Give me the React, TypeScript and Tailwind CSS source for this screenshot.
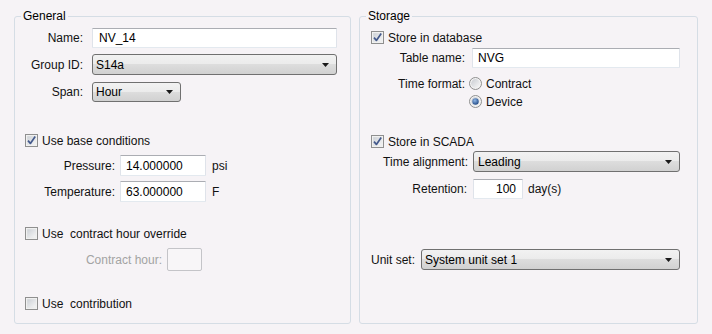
import React from "react";

const font = { fontFamily: '"Liberation Sans", Arial, sans-serif' };

function Check({ checked = false }: { checked?: boolean }) {
    return (
        <svg width="13" height="13" viewBox="0 0 13 13" className="shrink-0">
            <defs>
                <linearGradient id="cbg" x1="0" y1="0" x2="1" y2="1">
                    <stop offset="0" stopColor="#cbcfd5" />
                    <stop offset="1" stopColor="#f7f7f7" />
                </linearGradient>
            </defs>
            <rect x="0.5" y="0.5" width="12" height="12" fill="#f4f4f4" stroke="#8f8f8f" />
            <rect x="2" y="2" width="9" height="9" fill="url(#cbg)" stroke="#e8e8e8" strokeWidth="0.6" />
            {checked && (
                <path d="M3 6.6 L5.4 9.4 L10.2 2.6" fill="none" stroke="#44598c" strokeWidth="1.7" strokeLinejoin="round" />
            )}
        </svg>
    );
}

function Radio({ checked = false }: { checked?: boolean }) {
    return (
        <svg width="13" height="13" viewBox="0 0 13 13" className="shrink-0">
            <defs>
                <linearGradient id="rbg" x1="0" y1="0" x2="1" y2="1">
                    <stop offset="0" stopColor="#c9ccd2" />
                    <stop offset="1" stopColor="#f8f8f8" />
                </linearGradient>
                <radialGradient id="rdot" cx="0.4" cy="0.35" r="0.7">
                    <stop offset="0" stopColor="#8fb6e6" />
                    <stop offset="1" stopColor="#1d4683" />
                </radialGradient>
            </defs>
            <circle cx="6.5" cy="6.5" r="6" fill="#f2f2f2" stroke="#8f8f8f" />
            <circle cx="6.5" cy="6.5" r="4.4" fill="url(#rbg)" />
            {checked && <circle cx="6.5" cy="6.5" r="3.2" fill="url(#rdot)" />}
        </svg>
    );
}

function Arrow() {
    return (
        <svg width="7" height="4" viewBox="0 0 7 4" className="shrink-0">
            <path d="M0 0 H7 L3.5 4 Z" fill="#1a1a1a" />
        </svg>
    );
}

const inputCls =
    "flex items-center bg-white border border-[#dfe3ea] border-t-[#abadb3] border-b-[#e3e9ef] rounded-[1px] text-[12px] text-black";
const selectCls =
    "flex items-center justify-between rounded-[3px] border border-[#707070] bg-[linear-gradient(to_bottom,#f2f2f2_0%,#ebebeb_50%,#dddddd_50%,#d1d1d1_100%)] text-[12px] text-black pl-[3px] pr-[7px]";

export default function App() {
    return (
        <div className="w-[712px] h-[334px] bg-[#f6f3f6] text-[12px] leading-[14px] text-[#111]" style={font}>
            <div className="flex flex-row gap-[8px] pl-[14px] pt-[9px]">
                {/* General */}
                <fieldset className="w-[337px] h-[315px] border border-[#d5dde5] rounded-[3px] p-0 m-0 min-w-0">
                    <legend className="ml-[6px] px-[2px] leading-[14px] text-black">General</legend>
                    <div className="flex flex-col">
                        <div className="flex items-center mt-[5px] h-[20px]">
                            <span className="w-[68px] text-right">Name:</span>
                            <div className={`${inputCls} ml-[9px] w-[245px] h-[20px] pl-[6px]`}>NV_14</div>
                        </div>
                        <div className="flex items-center mt-[6px] h-[21px]">
                            <span className="w-[68px] text-right">Group ID:</span>
                            <div className={`${selectCls} ml-[9px] w-[245px] h-[21px]`}>
                                <span>S14a</span>
                                <Arrow />
                            </div>
                        </div>
                        <div className="flex items-center mt-[7px] h-[20px]">
                            <span className="w-[68px] text-right">Span:</span>
                            <div className={`${selectCls} ml-[9px] w-[89px] h-[20px]`}>
                                <span>Hour</span>
                                <Arrow />
                            </div>
                        </div>

                        <div className="flex items-center mt-[32px] h-[13px] pl-[10px] gap-[4px]">
                            <Check checked />
                            <span>Use base conditions</span>
                        </div>
                        <div className="flex items-center mt-[8px] h-[21px]">
                            <span className="w-[100px] text-right">Pressure:</span>
                            <div className={`${inputCls} ml-[5px] w-[86px] h-[21px] pl-[5px]`}>14.000000</div>
                            <span className="ml-[6px]">psi</span>
                        </div>
                        <div className="flex items-center mt-[5px] h-[21px]">
                            <span className="w-[100px] text-right">Temperature:</span>
                            <div className={`${inputCls} ml-[5px] w-[86px] h-[21px] pl-[5px]`}>63.000000</div>
                            <span className="ml-[6px]">F</span>
                        </div>

                        <div className="flex items-center mt-[25px] h-[13px] pl-[10px] gap-[4px]">
                            <Check />
                            <span className="whitespace-pre">{"Use  contract hour override"}</span>
                        </div>
                        <div className="flex items-center mt-[8px] h-[23px]">
                            <span className="w-[147px] text-right text-[#a3a3a3]">Contract hour:</span>
                            <div className="ml-[5px] w-[35px] h-[23px] border border-[#c4c4c8] rounded-[2px] bg-[#f8f6f8]" />
                        </div>

                        <div className="flex items-center mt-[26px] h-[13px] pl-[10px] gap-[4px]">
                            <Check />
                            <span className="whitespace-pre">{"Use  contribution"}</span>
                        </div>
                    </div>
                </fieldset>

                {/* Storage */}
                <fieldset className="w-[339px] h-[315px] border border-[#d5dde5] rounded-[3px] p-0 m-0 min-w-0">
                    <legend className="ml-[6px] px-[2px] leading-[14px] text-black">Storage</legend>
                    <div className="flex flex-col">
                        <div className="flex items-center mt-[8px] h-[13px] pl-[11px] gap-[4px]">
                            <Check checked />
                            <span>Store in database</span>
                        </div>
                        <div className="flex items-center mt-[4px] h-[20px]">
                            <span className="w-[105px] text-right">Table name:</span>
                            <div className={`${inputCls} ml-[7px] w-[208px] h-[20px] pl-[5px]`}>NVG</div>
                        </div>
                        <div className="flex items-center mt-[9px] h-[13px]">
                            <span className="w-[105px] text-right">Time format:</span>
                            <div className="flex items-center ml-[4px] gap-[4px]">
                                <Radio />
                                <span>Contract</span>
                            </div>
                        </div>
                        <div className="flex items-center mt-[5px] h-[13px] pl-[109px] gap-[4px]">
                            <Radio checked />
                            <span>Device</span>
                        </div>

                        <div className="flex items-center mt-[27px] h-[13px] pl-[11px] gap-[4px]">
                            <Check checked />
                            <span>Store in SCADA</span>
                        </div>
                        <div className="flex items-center mt-[3px] h-[21px]">
                            <span className="w-[108px] text-right">Time alignment:</span>
                            <div className={`${selectCls} ml-[5px] w-[207px] h-[21px] pl-[4px]`}>
                                <span>Leading</span>
                                <Arrow />
                            </div>
                        </div>
                        <div className="flex items-center mt-[7px] h-[20px]">
                            <span className="w-[107px] text-right">Retention:</span>
                            <div className={`${inputCls} ml-[6px] w-[50px] h-[20px] justify-end pr-[6px]`}>100</div>
                            <span className="ml-[5px]">day(s)</span>
                        </div>

                        <div className="flex items-center mt-[50px] h-[21px] pl-[11px]">
                            <span>Unit set:</span>
                            <div className={`${selectCls} ml-[6px] w-[259px] h-[21px]`}>
                                <span>System unit set 1</span>
                                <Arrow />
                            </div>
                        </div>
                    </div>
                </fieldset>
            </div>
        </div>
    );
}
